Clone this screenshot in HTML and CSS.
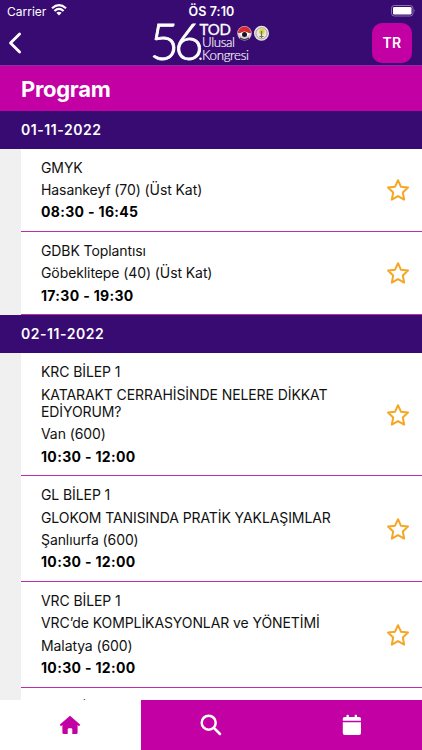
FILE: index.html
```html
<!DOCTYPE html>
<html lang="tr">
<head>
<meta charset="utf-8">
<title>Program</title>
<link rel="stylesheet" href="styles.css">
</head>
<body>
<svg class="defs" width="0" height="0" aria-hidden="true">
  <symbol id="star" viewBox="0 0 24 24"><path d="M12 2.200 14.900 8.700 22 9.600 16.800 14.400 18.200 21.600 12 18.100 5.800 21.600 7.200 14.400 2 9.600 9.100 8.700Z" fill="none" stroke="#f5a623" stroke-width="2" stroke-linejoin="round"/></symbol>
</svg>
<div class="app">
  <header class="top">
    <div class="status">
      <div class="carrier"><span>Carrier</span>
        <svg width="16" height="12" viewBox="0 0 16 12" fill="none" stroke="#fff" stroke-width="2.1"><path d="M1 4.3Q8-2 15 4.3M3.4 7Q8 2.8 12.6 7"/><path d="M5.4 8.8Q8 6.6 10.6 8.8L8 11.5Z" fill="#fff" stroke="none"/></svg>
      </div>
      <span class="clock">ÖS 7:10</span>
      <svg class="battery" width="25" height="12" viewBox="0 0 25 12"><rect x=".5" y=".5" width="21.5" height="10.5" rx="2.8" fill="none" stroke="#8a70ae"/><rect x="2" y="2" width="18.5" height="7.5" rx="1.3" fill="#fff"/><path d="M23.3 4Q24.7 5.7 23.3 7.5Z" fill="#8a70ae"/></svg>
    </div>
    <div class="bar">
      <svg class="back" width="14" height="22" viewBox="0 0 14 22"><path d="M11.6 2 2.5 11l9.1 9" fill="none" stroke="#fff" stroke-width="2.8" stroke-linecap="round" stroke-linejoin="round"/></svg>
      <svg class="logo" width="122" height="45" viewBox="150 20 122 45" fill="#fff">
        <text class="num" x="149.500" y="60" textLength="54" lengthAdjust="spacing">56</text>
        <text class="tod" x="199.500" y="35" textLength="31.500">TOD</text>
        <text class="thin" x="202" y="47" textLength="33">Ulusal</text>
        <circle cx="200.500" cy="58.800" r="1.200"/>
        <text class="thin" x="202" y="60" textLength="47">Kongresi</text>
        <g><circle cx="244.500" cy="33.300" r="7.200" fill="#d8c9d8"/><path d="M238 33a6.500 6.500 0 0 1 13 0Z" fill="#d52b32"/><path d="M239 34q5.500-5 11 0-5.500 6-11 0Z" fill="#fff"/><circle cx="244.500" cy="34.500" r="2.500" fill="#151522"/><path d="M240 38q4.500 3 9 0" fill="none" stroke="#333" stroke-width="1.200"/></g>
        <g><circle cx="261.500" cy="33.300" r="7.500" fill="#e9e5df"/><circle cx="261.500" cy="33.300" r="5.600" fill="none" stroke="#8e8792" stroke-width=".8"/><circle cx="261.800" cy="31.500" r="2.800" fill="#e0cf35"/><path d="M261.500 31v7M259.500 36.500h4" stroke="#777348" stroke-width="1.200"/></g>
      </svg>
      <div class="lang">TR</div>
    </div>
  </header>
  <h1>Program</h1>
  <main>
    <h2>01-11-2022</h2>
    <article><div class="info"><p>GMYK</p><p>Hasankeyf (70) (Üst Kat)</p><p class="time">08:30 - 16:45</p></div><svg class="star"><use href="#star"/></svg></article>
    <article><div class="info"><p>GDBK Toplantısı</p><p>Göbeklitepe (40) (Üst Kat)</p><p class="time">17:30 - 19:30</p></div><svg class="star"><use href="#star"/></svg></article>
    <h2>02-11-2022</h2>
    <article><div class="info"><p>KRC BİLEP 1</p><p>KATARAKT CERRAHİSİNDE NELERE DİKKAT<br>EDİYORUM?</p><p>Van (600)</p><p class="time">10:30 - 12:00</p></div><svg class="star"><use href="#star"/></svg></article>
    <article><div class="info"><p>GL BİLEP 1</p><p>GLOKOM TANISINDA PRATİK YAKLAŞIMLAR</p><p>Şanlıurfa (600)</p><p class="time">10:30 - 12:00</p></div><svg class="star"><use href="#star"/></svg></article>
    <article><div class="info"><p>VRC BİLEP 1</p><p>VRC’de KOMPLİKASYONLAR ve YÖNETİMİ</p><p>Malatya (600)</p><p class="time">10:30 - 12:00</p></div><svg class="star"><use href="#star"/></svg></article>
    <article><div class="info"><p>VRC BİLEP 2</p></div></article>
  </main>
  <nav>
    <div class="tab active"><svg width="22" height="20" viewBox="0 0 22 20"><path d="M11 .8 21.300 9.700 20 11.200 18.600 10V17.500Q18.600 19 17.100 19H13.300V14.500Q13.300 13.300 12 13.300H10Q8.700 13.300 8.700 14.500V19H4.900Q3.400 19 3.400 17.500V10L2 11.200.700 9.700Z" fill="#c300a3"/></svg></div>
    <div class="tab"><svg width="22" height="22" viewBox="0 0 22 22" fill="none" stroke="#fff" stroke-width="2.500" stroke-linecap="round"><circle cx="8.700" cy="8.700" r="7"/><path d="m14 14 6 6"/></svg></div>
    <div class="tab"><svg width="20" height="22" viewBox="0 0 20 22" fill="#fff"><path d="M.8 6.800V4.800Q.8 3 2.600 3H4.500V1.500Q4.500.700 5.300.700H6Q6.800.700 6.800 1.500V3H12.700V1.500Q12.700.700 13.500.700H14.200Q15 .7 15 1.500V3H17Q19 3 19 4.800V6.800ZM.8 8.200H19V19Q19 21 17 21H2.800Q.8 21 .8 19Z"/></svg></div>
  </nav>
</div>
</body>
</html>
```
FILE: styles.css
```css
* { box-sizing: border-box; }
body { margin: 0; font-family: Inter, "Liberation Sans", sans-serif; }
h1, h2, p { margin: 0; }
.defs { position: absolute; }
.app { width: 422px; height: 750px; display: flex; flex-direction: column; overflow: hidden; background: #f0f0f0; }
.top { height: 66px; flex: none; background: #380b72; color: #fff; border-bottom: 1px solid #992aa5; }
.status { height: 20px; display: grid; grid-template-columns: 1fr auto 1fr; align-items: center; padding: 2px 6px 0 7px; font-size: 12px; }
.carrier { display: flex; align-items: center; gap: 5px; }
.carrier svg { margin-top: -2px; }
.clock { font-weight: 600; font-size: 12.5px; letter-spacing: .1px; }
.battery { justify-self: end; }
.bar { height: 45px; display: grid; grid-template-columns: 142px 1fr auto; padding: 0 10px 0 8px; align-items: center; }
.logo { display: block; overflow: visible; }
.num { font: 300 51px Lato, sans-serif; stroke: #fff; stroke-width: .8px; }
.tod { font: 400 15px Lato, sans-serif; stroke: #fff; stroke-width: .3px; }
.thin { font: 300 13.300px Lato, sans-serif; stroke: #fff; stroke-width: .15px; }
.lang { width: 40px; height: 40px; border-radius: 10px; background: #c300a3; display: grid; place-items: center; font-size: 14px; font-weight: 600; letter-spacing: .2px; }
h1 { height: 44.5px; flex: none; background: #c300a3; color: #fff; padding-left: 21px; font-size: 22px; line-height: 46px; font-weight: 700; letter-spacing: -.3px; }
main { flex: 1; min-height: 0; overflow: hidden; }
h2 { height: 38px; background: #380b72; color: #fff; padding-left: 21px; font-size: 14px; line-height: 37px; font-weight: 600; letter-spacing: .55px; }
article { margin-left: 21px; padding: 10px 12px 10.400px 20px; border-bottom: 1px solid #c02cad; background: #fff; color: #111; display: flex; justify-content: space-between; align-items: center; }
article:last-child { padding-top: 11px; }
.info { display: flex; flex-direction: column; gap: 5.200px; font-size: 14px; line-height: 17.200px; letter-spacing: -.09px; white-space: nowrap; }
.time { font-weight: 700; color: #000; letter-spacing: .33px; }
.star { width: 24px; height: 24px; flex: none; position: relative; top: .5px; }
nav { height: 50px; flex: none; display: grid; grid-template-columns: repeat(3, 1fr); }
.tab { background: #c300a3; display: grid; place-items: center; }
.active { background: #fff; }
```
